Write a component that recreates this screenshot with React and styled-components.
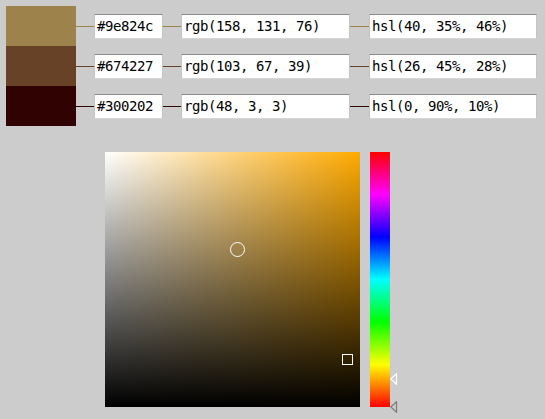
import React from 'react';
import styled, { createGlobalStyle } from 'styled-components';

const GlobalStyle = createGlobalStyle`
  html, body {
    margin: 0;
    padding: 0;
    background: #cccccc;
  }
`;

const colors = [
  { hex: '#9e824c', rgb: 'rgb(158, 131, 76)', hsl: 'hsl(40, 35%, 46%)' },
  { hex: '#674227', rgb: 'rgb(103, 67, 39)', hsl: 'hsl(26, 45%, 28%)' },
  { hex: '#300202', rgb: 'rgb(48, 3, 3)', hsl: 'hsl(0, 90%, 10%)' },
];

const Page = styled.main`
  width: 545px;
  height: 419px;
  padding: 6px 0 0 6px;
  box-sizing: border-box;
  background: #cccccc;
  font-family: 'DejaVu Sans Mono', 'Liberation Mono', monospace;
  overflow: hidden;
`;

const Rows = styled.div`
  display: flex;
  flex-direction: column;
`;

const Row = styled.div`
  display: flex;
  align-items: center;
  height: 40px;
`;

const Swatch = styled.div`
  width: 70px;
  height: 40px;
  background: ${(p) => p.color};
`;

const Connector = styled.div`
  width: ${(p) => p.w || 18}px;
  height: 1px;
  background: ${(p) => p.color};
`;

const Field = styled.div`
  box-sizing: border-box;
  width: ${(p) => p.w}px;
  height: 25px;
  padding: 0 0 1px 2px;
  display: flex;
  align-items: center;
  background: #ffffff;
  border: 1px solid #c4c4c4;
  border-top-color: #8a8a8a;
  border-bottom-color: #d6d6d6;
  font-family: 'DejaVu Sans Mono', 'Liberation Mono', monospace;
  font-size: 14px;
  letter-spacing: -0.43px;
  color: #000;
  white-space: nowrap;
`;

const Picker = styled.div`
  display: flex;
  gap: 10px;
  margin: 26px 0 0 99px;
`;

const Square = styled.div`
  position: relative;
  width: 255px;
  height: 255px;
  background:
    linear-gradient(to bottom, rgba(0, 0, 0, 0), #000),
    linear-gradient(to right, #fff, ${(p) => p.hue});
`;

const CircleMark = styled.div`
  position: absolute;
  left: ${(p) => p.x}px;
  top: ${(p) => p.y}px;
  width: 15px;
  height: 15px;
  margin: -7.5px 0 0 -7.5px;
  box-sizing: border-box;
  border: 1.5px solid #fff;
  border-radius: 50%;
`;

const SquareMark = styled.div`
  position: absolute;
  left: ${(p) => p.x}px;
  top: ${(p) => p.y}px;
  width: 11px;
  height: 11px;
  margin: -5.5px 0 0 -5.5px;
  box-sizing: border-box;
  border: 1px solid #fff;
`;

const HueBar = styled.div`
  position: relative;
  width: 20px;
  height: 255px;
  background: linear-gradient(
    to bottom,
    #ff0000,
    #ff00ff,
    #0000ff,
    #00ffff,
    #00ff00,
    #ffff00,
    #ff0000
  );
`;

const Arrow = styled.svg`
  position: absolute;
  left: 20px;
  top: ${(p) => p.y - 6}px;
`;

const HueArrow = ({ y, color }) => (
  <Arrow y={y} width="8" height="12" viewBox="0 0 8 12">
    <path d="M0.8 6 L6.5 0.8 L6.5 11.2 Z" fill="none" stroke={color} strokeWidth="1.2" />
  </Arrow>
);

const App = () => (
  <Page>
    <GlobalStyle />
    <Rows>
      {colors.map((c) => (
        <Row key={c.hex}>
          <Swatch color={c.hex} />
          <Connector color={c.hex} />
          <Field w={69}>{c.hex}</Field>
          <Connector color={c.hex} />
          <Field w={169}>{c.rgb}</Field>
          <Connector color={c.hex} w={19} />
          <Field w={168}>{c.hsl}</Field>
        </Row>
      ))}
    </Rows>
    <Picker>
      <Square hue="#ffaa00">
        <CircleMark x={132.5} y={97.5} />
        <SquareMark x={242.5} y={207.5} />
      </Square>
      <HueBar>
        <HueArrow y={226.5} color="#ffffff" />
        <HueArrow y={255} color="#7a7a7a" />
      </HueBar>
    </Picker>
  </Page>
);

export default App;
